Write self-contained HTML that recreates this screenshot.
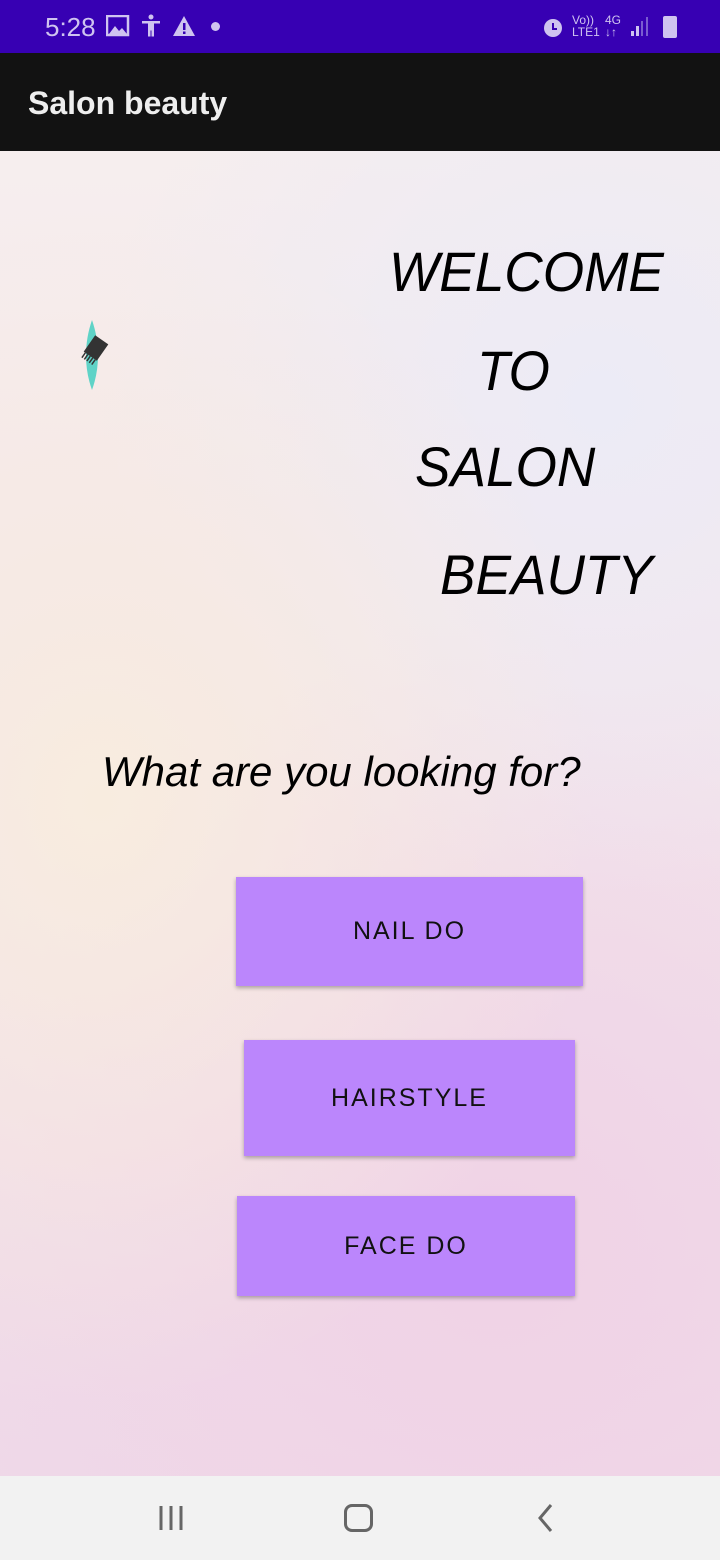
<!DOCTYPE html>
<html><head><meta charset="utf-8"><style>
*{margin:0;padding:0;box-sizing:border-box}
body{width:720px;height:1560px;overflow:hidden;font-family:"Liberation Sans",sans-serif;position:relative}
.sb{position:absolute;top:0;left:0;width:720px;height:53px;background:#3700b3;color:#cfc3f0}
.ab{position:absolute;top:53px;left:0;width:720px;height:98px;background:#121212;color:#eee;font-size:32px;font-weight:bold;padding:32px 28px}
.bg{position:absolute;top:151px;left:0;width:720px;height:1325px;
background:radial-gradient(ellipse 500px 600px at 100px 650px,#f8ecdf 0%,rgba(248,236,223,0) 100%),
radial-gradient(ellipse 500px 500px at 600px 250px,#ecebf6 0%,rgba(236,235,246,0) 100%),
radial-gradient(ellipse 600px 600px at 500px 1100px,#f0d2e6 0%,rgba(240,210,230,0) 100%),
linear-gradient(180deg,#f6eeee,#efd9e8)}
.t{position:absolute;font-style:italic;font-size:56px;color:#000;line-height:1;transform:scaleX(.95);transform-origin:left top}
.btn{position:absolute;background:#bb86fc;color:#111;font-size:25px;letter-spacing:2px;display:flex;align-items:center;justify-content:center;box-shadow:0 2px 4px rgba(0,0,0,.3)}
.nav{position:absolute;top:1476px;left:0;width:720px;height:84px;background:#f2f2f2}
</style></head><body>
<div class="sb">
<span style="position:absolute;left:45px;top:12px;font-size:26px">5:28</span>
<svg style="position:absolute;left:106px;top:15px" width="24" height="22"><rect x="1" y="1" width="21" height="19" fill="none" stroke="#cfc3f0" stroke-width="2.5"/><path d="M3 19 L9 11 L13 16 L16 13 L21 19Z" fill="#cfc3f0"/></svg>
<svg style="position:absolute;left:140px;top:14px" width="22" height="24" fill="#cfc3f0"><circle cx="11" cy="3" r="2.5"/><path d="M2 7h18v2.5h-6v13h-2.5v-6h-1v6H8v-13H2z"/></svg>
<svg style="position:absolute;left:172px;top:15px" width="24" height="22"><path d="M12 1L23 21H1Z" fill="#cfc3f0"/><rect x="11" y="8" width="2.5" height="7" fill="#3700b3"/><rect x="11" y="16.5" width="2.5" height="2.5" fill="#3700b3"/></svg>
<div style="position:absolute;left:211px;top:22px;width:9px;height:9px;border-radius:50%;background:#cfc3f0"></div>
<svg style="position:absolute;left:541px;top:15px" width="24" height="24"><circle cx="12" cy="13" r="9" fill="#cfc3f0"/><path d="M12 8v6h4" stroke="#3700b3" stroke-width="2" fill="none"/></svg>
<span style="position:absolute;left:572px;top:14px;font-size:12px;line-height:12px">Vo))<br>LTE1</span>
<span style="position:absolute;left:605px;top:14px;font-size:12px;line-height:12px">4G<br>↓↑</span>
<svg style="position:absolute;left:630px;top:16px" width="20" height="22"><rect x="1" y="15" width="3" height="5" fill="#cfc3f0"/><rect x="6" y="10" width="3" height="10" fill="#cfc3f0"/><rect x="11" y="5" width="2" height="15" fill="#7a5cd0"/><rect x="16" y="1" width="2" height="19" fill="#7a5cd0"/></svg>
<div style="position:absolute;left:663px;top:16px;width:14px;height:22px;background:#cfc3f0;border-radius:2px"></div>
</div>
<div class="ab">Salon beauty</div>
<div class="bg"></div>
<svg style="position:absolute;left:80px;top:318px" width="32" height="74"><path d="M12 2 C20 25 20 50 12 72 C4 50 4 25 12 2Z" fill="#5fd3c7"/><g transform="rotate(35 16 30)"><rect x="8" y="20" width="16" height="20" fill="#333"/><path d="M10 40v6M13 40v6M16 40v6M19 40v6M22 40v6" stroke="#333" stroke-width="1.5"/></g></svg>
<div class="t" style="left:389px;top:244px">WELCOME</div>
<div class="t" style="left:477px;top:343px">TO</div>
<div class="t" style="left:415px;top:439px">SALON</div>
<div class="t" style="left:440px;top:547px">BEAUTY</div>
<div style="position:absolute;left:102px;top:748px;font-style:italic;font-size:42px">What are you looking for?</div>
<div class="btn" style="left:236px;top:877px;width:347px;height:109px">NAIL DO</div>
<div class="btn" style="left:244px;top:1040px;width:331px;height:116px">HAIRSTYLE</div>
<div class="btn" style="left:237px;top:1196px;width:338px;height:100px">FACE DO</div>
<div class="nav">
<svg style="position:absolute;left:157px;top:28px" width="30" height="28" stroke="#666" stroke-width="3"><path d="M4 2v24M14 2v24M24 2v24"/></svg>
<div style="position:absolute;left:344px;top:28px;width:29px;height:28px;border:3px solid #666;border-radius:8px"></div>
<svg style="position:absolute;left:536px;top:27px" width="20" height="30" stroke="#666" stroke-width="3" fill="none"><path d="M15 2L4 15L15 28"/></svg>
</div>
</body></html>
